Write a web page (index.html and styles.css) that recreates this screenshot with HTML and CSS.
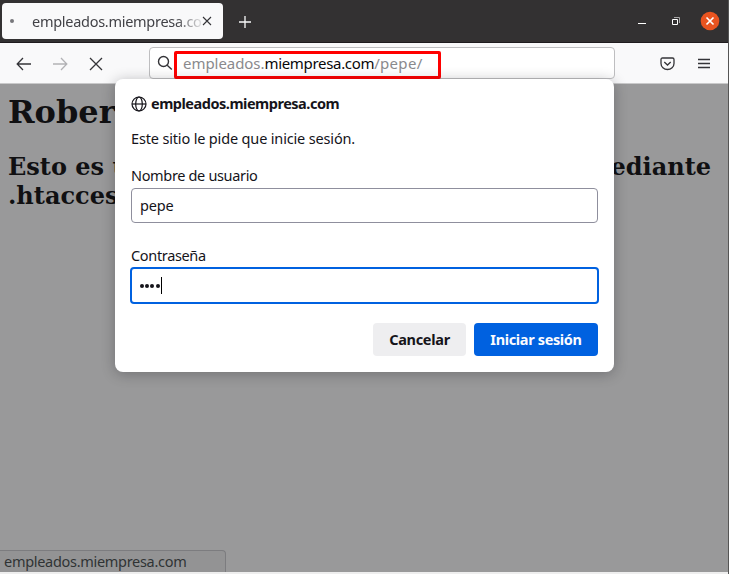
FILE: index.html
```html
<!DOCTYPE html>
<html lang="es">
<head>
<meta charset="utf-8">
<title>empleados.miempresa.com</title>
<link rel="stylesheet" href="styles.css">
</head>
<body>
<div class="window">
  <header class="titlebar">
    <div class="tab">
      <span class="tab-dot"></span>
      <span class="tab-title">empleados.miempresa.co</span>
      <svg class="tab-close" width="10" height="10" viewBox="0 0 10 10"><path d="M1 1l8 8M9 1L1 9"/></svg>
    </div>
    <svg class="new-tab" width="12" height="12" viewBox="0 0 12 12"><path d="M6 0v12M0 6h12"/></svg>
    <div class="controls">
      <svg width="8" height="14" viewBox="0 0 8 14"><path d="M0 9.500h8"/></svg>
      <svg width="8" height="8" viewBox="0 0 8 8"><path class="back" d="M2 .5h5.500V6"/><path d="M.5 2.500h5v5h-5z"/></svg>
      <svg width="20" height="20" viewBox="0 0 20 20"><circle cx="10" cy="10" r="9.300"/><path d="M6.500 6.500l7 7M13.500 6.500l-7 7"/></svg>
    </div>
  </header>
  <nav class="toolbar">
    <svg class="nav-icon" width="16" height="14" viewBox="0 0 16 14"><path d="M15 7H1.500M7 1L1.200 7 7 13"/></svg>
    <svg class="nav-icon disabled" width="16" height="14" viewBox="0 0 16 14"><path d="M1 7h13.500M9 1l5.800 6L9 13"/></svg>
    <svg class="nav-icon" width="14" height="14" viewBox="0 0 14 14"><path d="M1 1l12 12M13 1L1 13"/></svg>
    <div class="urlbar">
      <svg class="search" width="16" height="16" viewBox="0 0 16 16"><circle cx="6.500" cy="6.500" r="5"/><path d="M10.200 10.200l4.600 4.300"/></svg>
      <div class="highlight"><span class="url">empleados.<b>miempresa.com</b><span class="path">/pepe/</span></span></div>
    </div>
    <svg class="pocket" width="15" height="14" viewBox="0 0 15 14"><path d="M2.500 1h10q1.500 0 1.500 1.500v4a6.500 6 0 0 1-13 0v-4Q1 1 2.500 1zM4.300 5l3.200 3 3.200-3"/></svg>
    <svg class="menu" width="12" height="11" viewBox="0 0 12 11"><path d="M0 1.500h12M0 5.500h12M0 9.500h12"/></svg>
  </nav>
  <main class="page">
    <h1>Rober</h1>
    <h2><span class="line"><span>Esto es u</span><span>ediante</span></span>.htacces</h2>
    <div class="status"><span>empleados.miempresa.com</span></div>
  </main>
  <div class="frame-bottom"></div>
  <form class="dialog">
    <div class="origin">
      <svg width="16" height="16" viewBox="0 0 16 16"><circle cx="8" cy="8" r="7"/><ellipse cx="8" cy="8" rx="3.300" ry="7"/><path d="M1 8h14"/></svg>
      <strong>empleados.miempresa.com</strong>
    </div>
    <p class="message">Este sitio le pide que inicie sesión.</p>
    <label class="label">Nombre de usuario</label>
    <div class="field"><span>pepe</span></div>
    <label class="label second">Contraseña</label>
    <div class="field focused"><i></i><i></i><i></i><i></i><span class="caret"></span></div>
    <div class="buttons">
      <div class="btn cancel">Cancelar</div>
      <div class="btn login">Iniciar sesión</div>
    </div>
  </form>
</div>
</body>
</html>
```
FILE: styles.css
```css
* { box-sizing: border-box; }
body { margin: 0; font-family: "Noto Sans", "Open Sans", sans-serif; color: #15141a; }
svg { display: block; flex: none; fill: none; stroke: #343438; stroke-width: 1.3; }
.window { position: relative; width: 729px; height: 574px; overflow: hidden; border-right: 1px solid #555; display: flex; flex-direction: column; }
.titlebar { height: 43px; flex: none; background: #333132; border-bottom: 1px solid #1f1b1e; display: flex; align-items: flex-start; padding: 3px 8px 0 2px; }
.tab { width: 221px; height: 36px; border-radius: 4px; background: #f9f9fa; display: flex; align-items: center; padding: 0 11px 0 8px; }
.tab-dot { width: 4px; height: 4px; border-radius: 50%; background: #77777a; }
.tab-title { width: 171px; margin-left: 18px; white-space: nowrap; font-size: 14.5px; line-height: 22px; color: #424247; letter-spacing: -.28px; -webkit-mask-image: linear-gradient(to right, #000 84%, transparent 101%); mask-image: linear-gradient(to right, #000 84%, transparent 101%); }
.tab-close { margin-left: -1px; stroke-width: 1.1; }
.new-tab { margin: 13px 0 0 16px; stroke: #f9f9fa; stroke-width: 1.3; }
.controls { margin-left: auto; display: flex; align-items: center; height: 36px; }
.controls svg { stroke: #fff; stroke-width: 1; }
.controls svg:nth-child(2) { margin: 0 20px 0 26px; }
.controls .back { stroke: #a9a8a8; }
.controls circle { fill: #e95420; stroke: none; }
.controls svg:last-child { stroke-width: 1.7; }
.toolbar { height: 41px; flex: none; background: #f9f9fa; border-bottom: 1px solid #c9c9ca; display: flex; align-items: center; padding: 0 18px 0 16px; }
.nav-icon { position: relative; top: 1px; }
.nav-icon.disabled { stroke: #b2b2b5; margin: 0 21px 0 20px; }
.urlbar { width: 466px; height: 32px; margin-left: 46px; border: 1px solid #bebec0; border-radius: 4px; background: #fff; display: flex; align-items: center; padding-left: 7px; }
.search { stroke-width: 1.4; }
.highlight { width: 267px; height: 28px; margin: 3px 0 0 1px; border: 3px solid #f00; border-radius: 2px; padding-left: 6px; }
.url { display: block; white-space: nowrap; font-size: 15px; line-height: 19px; color: #8a8a8d; letter-spacing: -.05px; }
.url b { font-weight: 400; color: #08080a; letter-spacing: -.32px; }
.path { letter-spacing: .3px; }
.pocket { margin-left: 45px; position: relative; top: 1px; }
.menu { margin: 0 0 0 auto; }
.page { flex: 1; background: #99999a; padding: 9px 8px 8px; position: relative; color: #101012; font-family: "DejaVu Serif", serif; }
h1 { margin: 0; font-size: 32px; line-height: 38px; }
h2 { margin: 21px 0 0; font-size: 24px; line-height: 29px; }
.line { display: flex; justify-content: space-between; width: 703px; }
.status { position: absolute; left: 0; bottom: 0; width: 226px; height: 22px; border: 1px solid #7c7c7f; border-left: 0; border-bottom: 0; border-radius: 0 4px 0 0; background: #939394; padding-left: 4px; font: 14.5px/20px "Noto Sans", sans-serif; letter-spacing: -.3px; color: #303334; white-space: nowrap; }
.frame-bottom { height: 2px; flex: none; background: #eee; }
.dialog { position: absolute; left: 115px; top: 79px; width: 499px; height: 293px; padding: 16px 16px 0; background: #fff; border-radius: 8px; box-shadow: 0 2px 14px rgba(20,20,25,.3); font-size: 14.5px; white-space: nowrap; }
.origin { display: flex; align-items: center; gap: 4px; height: 17px; }
.origin svg { stroke: #15141a; stroke-width: 1.2; }
.origin strong { letter-spacing: -.48px; padding-bottom: 2px; }
.message { margin: 16px 0 0; line-height: 20px; letter-spacing: -.16px; }
.label { display: block; margin-top: 17px; line-height: 20px; letter-spacing: -.34px; }
.label.second { margin-top: 23px; }
.field { height: 35px; margin-top: 3px; border: 1px solid #8f8f9d; border-radius: 4px; padding: 0 8px 2px; display: flex; align-items: center; letter-spacing: -.2px; }
.label.second { margin-top: 22px; }
.field.focused { height: 37px; margin: 2px -1px 0; padding-bottom: 0; border: 2px solid #0061e0; }
.field i { width: 4px; height: 4px; border-radius: 50%; background: #15141a; margin-right: 1.2px; }
.caret { width: 1px; height: 17px; background: #000; }
.buttons { display: flex; justify-content: flex-end; gap: 8px; margin-top: 19px; }
.btn { height: 33px; padding-bottom: 2px; border-radius: 4px; display: flex; align-items: center; justify-content: center; font-weight: 700; letter-spacing: -.3px; background: #eeeef0; width: 93px; }
.login { width: 124px; background: #0061e0; color: #fbfbfe; letter-spacing: -.35px; }
```
